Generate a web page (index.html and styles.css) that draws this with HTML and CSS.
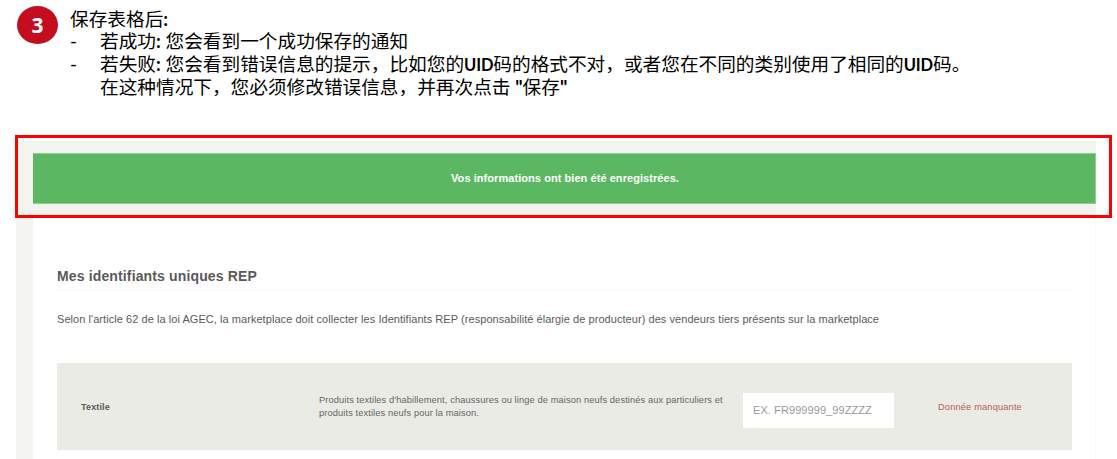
FILE: index.html
```
<!DOCTYPE html>
<html lang="zh">
<head>
    <meta charset="UTF-8">
    <title>Mes identifiants uniques REP</title>
    <link rel="stylesheet" href="styles.css">
</head>
<body>
    <div class="step">
        <div class="step-number">3</div>
        <div class="step-text">
            <p>保存表格后<b>:</b></p>
            <ul>
                <li>若成功<b>:</b> 您会看到一个成功保存的通知</li>
                <li>若失败<b>:</b> 您会看到错误信息的提示，比如您的<b class="code">UID</b>码的格式不对，或者您在不同的类别使用了相同的<b class="code">UID</b>码。<br>在这种情况下，您必须修改错误信息，并再次点击 <b>"</b>保存<b>"</b></li>
            </ul>
        </div>
    </div>
    <div class="highlight">
        <div class="alert-area">
            <div class="alert">Vos informations ont bien été enregistrées.</div>
        </div>
    </div>
    <div class="page" lang="fr">
        <div class="panel">
            <h1>Mes identifiants uniques REP</h1>
            <p class="intro">Selon l'article 62 de la loi AGEC, la marketplace doit collecter les Identifiants REP (responsabilité élargie de producteur) des vendeurs tiers présents sur la marketplace</p>
            <div class="row">
                <div class="category">Textile</div>
                <div class="description">Produits textiles d'habillement, chaussures ou linge de maison neufs destinés aux particuliers et<br>produits textiles neufs pour la maison.</div>
                <div class="uid">EX. FR999999_99ZZZZ</div>
                <div class="status">Donnée manquante</div>
            </div>
        </div>
    </div>
</body>
</html>
```
FILE: styles.css
```
* {
    box-sizing: border-box;
}
body {
    margin: 0;
    height: 459px;
    overflow: hidden;
    background: #fff;
    font-family: "Liberation Sans", Arial, sans-serif;
    color: #5a5a5a;
}
.step {
    display: flex;
    height: 135px;
    padding: 6px 0 0 17px;
    font-family: Lato, "Noto Sans CJK SC", sans-serif;
    color: #000;
}
.step-number {
    width: 41px;
    height: 38px;
    border-radius: 50%;
    background: #c40d1e;
    color: #fff;
    font-family: "Open Sans", sans-serif;
    font-size: 21px;
    font-weight: bold;
    line-height: 38px;
    text-align: center;
}
.step-text {
    margin: 2px 0 0 12px;
    font-size: 18.67px;
    line-height: 22.4px;
    white-space: nowrap;
}
.step-text p,
.step-text ul {
    margin: 0;
    padding: 0;
}
.step-text ul {
    list-style: none;
}
.step-text li {
    display: flow-root;
    padding-left: 30px;
}
.step-text li::before {
    content: "-";
    float: left;
    margin-left: -30px;
}
.step-text .code {
    font-size: 16.5px;
    letter-spacing: -0.15px;
}
.highlight {
    width: 1097px;
    height: 83px;
    margin-left: 15px;
    padding-top: 3px;
    border: 3px solid #f00;
}
.alert-area {
    width: 1078px;
    height: 74px;
    padding: 12px 0 0 15px;
    background: #f3f4ef;
}
.alert {
    height: 51px;
    padding-left: 2px;
    border: 1px solid #8fcd91;
    border-left: 0;
    background: #5cb763;
    color: #fff;
    font-size: 11px;
    font-weight: bold;
    letter-spacing: 0.06px;
    line-height: 49px;
    text-align: center;
}
.page {
    width: 1080px;
    height: 241px;
    margin-left: 16px;
    padding-left: 17px;
    background: #f3f4ef;
}
.panel {
    height: 241px;
    padding: 46px 23px 0 24px;
    border-right: 1px solid #fafafa;
    background: #fff;
}
h1 {
    height: 27px;
    margin: 0;
    border-bottom: 1px solid #f8f8f8;
    font-size: 14px;
    letter-spacing: 0.14px;
    line-height: 25px;
}
.intro {
    margin: 18px 0 0;
    font-size: 11px;
    letter-spacing: 0.055px;
    line-height: 20px;
    white-space: nowrap;
}
.row {
    display: flex;
    align-items: center;
    height: 87px;
    margin-top: 34px;
    padding-left: 24px;
    background: #eaebe5;
    white-space: nowrap;
}
.category {
    width: 238px;
    font-size: 9px;
    font-weight: bold;
    letter-spacing: 0.15px;
}
.description {
    width: 424px;
    color: #666;
    font-size: 9.3px;
    letter-spacing: 0.1px;
    line-height: 12.5px;
}
.uid {
    width: 151px;
    height: 35px;
    margin-top: 7px;
    padding-left: 10px;
    background: #fff;
    color: #999;
    font-size: 11px;
    letter-spacing: 0.08px;
    line-height: 35px;
}
.status {
    margin-left: 44px;
    color: #bd5a5a;
    font-size: 9.3px;
    letter-spacing: 0.14px;
}
```
